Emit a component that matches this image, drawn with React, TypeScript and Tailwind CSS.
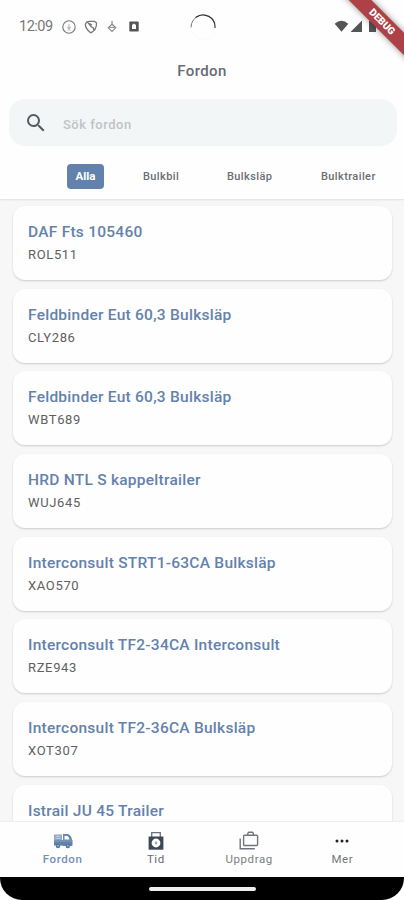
import React from "react";

const vehicles = [
  { name: "DAF Fts 105460", plate: "ROL511" },
  { name: "Feldbinder Eut 60,3 Bulksläp", plate: "CLY286" },
  { name: "Feldbinder Eut 60,3 Bulksläp", plate: "WBT689" },
  { name: "HRD NTL S kappeltrailer", plate: "WUJ645" },
  { name: "Interconsult STRT1-63CA Bulksläp", plate: "XAO570" },
  { name: "Interconsult TF2-34CA Interconsult", plate: "RZE943" },
  { name: "Interconsult TF2-36CA Bulksläp", plate: "XOT307" },
  { name: "Istrail JU 45 Trailer", plate: "" },
];

function StatusBar() {
  return (
    <div className="flex h-[54px] shrink-0 items-center pl-[19px] text-[#777]">
      <span className="w-[34px] text-[14.5px] leading-none tracking-[-0.5px]">12:09</span>
      <svg className="ml-[9px]" width="14" height="14" viewBox="0 0 14 14" fill="none" stroke="#777" strokeWidth="1.1">
        <circle cx="7" cy="7" r="6.2" />
        <path d="M7 4v4M5.3 7 7 8.8 8.7 7M5.5 10h3" stroke="#bbb" />
      </svg>
      <svg className="ml-[8px]" width="14" height="14" viewBox="0 0 14 14" fill="none" stroke="#777" strokeWidth="1.3">
        <path d="M3.5 2.2 7 6.5l2.6 1.7V11M6.8 13C3.8 10.5 1.2 8 1.4 4.2L2.6 2 5 1.3h5.5l2 1.6c.2 2.6-.3 4.7-1.5 6.6L6.8 13M5.5 3.5 8 5" />
      </svg>
      <svg className="ml-[9px]" width="10" height="12" viewBox="0 0 10 12" fill="none" stroke="#888" strokeWidth="1.2">
        <path d="M5 0v3M5 3 8.7 6.8 5 10.5 1.3 6.8Z" />
        <path d="M1.5 6.4h7" stroke="#999" />
      </svg>
      <svg className="ml-[12px]" width="10" height="12" viewBox="0 0 10 12">
        <rect x=".3" y=".5" width="9.4" height="10" rx=".8" fill="#555" />
        <path d="M3 8V4L5 2.5 7 4v4Z" fill="#fff" />
      </svg>
      <svg className="ml-[50px]" width="28" height="28" viewBox="0 0 28 28" fill="none" strokeLinecap="round">
        <circle cx="14" cy="14" r="12.3" stroke="#fafafa" />
        <path d="M2 14A12 12 0 0 1 10.5 2.5" stroke="#777" strokeWidth="1" />
        <path d="M7 4.2A12 12 0 0 1 26 14.5" stroke="#333" strokeWidth="1.2" />
      </svg>
      <svg className="ml-[117px]" width="44" height="14" viewBox="0 0 44 14" fill="#555">
        <path d="M.7 3.8Q7.5-2.3 14.3 3.8L7.5 11.7Z" />
        <path d="M28 .5V12H16.5Z" />
        <path d="M35 1h2V-.2h3V1h2v11h-7z" />
      </svg>
    </div>
  );
}

function Category({ label, className }: { label: string; className: string }) {
  return <span className={"whitespace-nowrap text-[11px] font-medium leading-none tracking-[0.4px] text-[#6b6e73] " + className}>{label}</span>;
}

function TruckIcon() {
  return (
    <svg width="20" height="18" viewBox="0 0 20 18">
      <path d="M1 2.5h8v5.5H1z" fill="#8ea5c3" />
      <path d="M2.5 4.3h5M2.5 6.3h5" stroke="#dbe4ef" strokeWidth=".7" />
      <path d="M10 2h5q3.5 1.5 4 6v6H10Z" fill="#6888b0" />
      <path d="M11.5 4h3q1.6 1.2 2 3.6h-5z" fill="#fff" />
      <path d="M1 8h18.5v5.6H1z" fill="#6282ab" />
      <path d="M1 9h18" stroke="#88a1c2" />
      <circle cx="5" cy="14" r="2.2" fill="#52749f" />
      <circle cx="14.8" cy="14" r="2.2" fill="#52749f" />
      <circle cx="5" cy="13.8" r=".8" fill="#c7d4e5" />
      <circle cx="14.8" cy="13.8" r=".8" fill="#c7d4e5" />
    </svg>
  );
}

function ClockIcon() {
  return (
    <svg width="18" height="20" viewBox="0 0 18 20">
      <path d="M4.7 6V1.7h8.6V6" fill="none" stroke="#69717d" strokeWidth="1.3" />
      <path d="M1.6 5.5h14.8v13.2H1.6z" fill="#3d4857" />
      <circle cx="9" cy="12" r="4.4" fill="#fff" />
      <path d="M9 10.5v2l.8.5" fill="none" stroke="#7f8893" strokeWidth="1.4" />
    </svg>
  );
}

function JobsIcon() {
  return (
    <svg width="20" height="20" viewBox="0 0 20 20" fill="none" stroke="#70757c" strokeWidth="1.4">
      <rect x="4.6" y="4.2" width="14" height="10.3" rx="1" />
      <path d="M8.8 4.2V2.3l1-1h3.6l1 1v1.9M1.2 7.5v10.2h14.6" />
    </svg>
  );
}

function NavItem({ label, className, children }: { label: string; className: string; children: React.ReactNode }) {
  return (
    <div className="flex flex-1 flex-col items-center pt-[9px]">
      <div className="flex h-[20px] items-center">{children}</div>
      <span className={"mt-[2px] text-[11.5px] leading-[12px] tracking-[0.6px] " + className}>{label}</span>
    </div>
  );
}

export default function App() {
  return (
    <div className="relative flex h-[900px] w-[404px] flex-col overflow-hidden bg-[#f7f7f7] font-['Roboto','Liberation_Sans',sans-serif]">
      <header className="flex h-[199px] shrink-0 flex-col bg-[#fefefe] shadow-[0_1px_2px_rgba(0,0,0,0.1)]">
        <StatusBar />
        <h1 className="flex h-[34px] items-center justify-center text-[15px] font-medium tracking-[0.4px] text-[#666b74]">Fordon</h1>
        <div className="ml-[9px] mr-[7px] mt-[11px] flex h-[47px] shrink-0 items-center rounded-[16px] bg-[#f3f6f7] pl-[15px]">
          <svg width="24" height="24" viewBox="0 0 24 24" fill="#555a61">
            <path d="M15.5 14h-.79l-.28-.27A6.47 6.47 0 0 0 16 9.5 6.5 6.5 0 1 0 9.5 16c1.61 0 3.09-.59 4.23-1.57l.27.28v.79l5 4.99L20.49 19zm-6 0a4.5 4.5 0 1 1 0-9 4.5 4.5 0 0 1 0 9" />
          </svg>
          <span className="ml-[15px] mt-[3px] text-[13px] font-medium leading-none tracking-[0.5px] text-[#c0c3c5]">Sök fordon</span>
        </div>
        <nav className="flex h-[53px] items-center pl-[67px] pt-[8px]">
          <div className="flex h-[25px] w-[37px] items-center justify-center rounded-[4px] bg-[#6282ab] pt-px text-[11.5px] font-bold text-white">Alla</div>
          <Category label="Bulkbil" className="ml-[39px] w-[84px]" />
          <Category label="Bulksläp" className="w-[94px]" />
          <Category label="Bulktrailer" className="" />
        </nav>
      </header>

      <main className="flex min-h-0 flex-1 flex-col gap-[8.7px] overflow-hidden pl-[13px] pr-[12px] pt-[7px]">
        {vehicles.map((vehicle, i) => (
          <article key={i} className="h-[74px] shrink-0 rounded-[12px] bg-[#fefefe] pl-[15px] pt-[16px] shadow-[0_1px_2px_rgba(0,0,0,0.18)]">
            <h2 className="whitespace-nowrap text-[15.5px] font-medium leading-[20px] tracking-[0.25px] text-[#6482ac]">{vehicle.name}</h2>
            <p className="mt-[5px] text-[13px] leading-[16px] tracking-[0.65px] text-[#606060]">{vehicle.plate}</p>
          </article>
        ))}
      </main>

      <nav className="flex h-[56px] shrink-0 border-t border-[#eeeeee] bg-[#fefefe] pl-[16px] pr-[15px]">
        <NavItem label="Fordon" className="font-medium text-[#7490b6]"><TruckIcon /></NavItem>
        <NavItem label="Tid" className="text-[#666b72]"><ClockIcon /></NavItem>
        <NavItem label="Uppdrag" className="text-[#7b7e82]"><JobsIcon /></NavItem>
        <NavItem label="Mer" className="text-[#74777b]">
          <svg width="14" height="4" viewBox="0 0 14 4" fill="#222"><circle cx="2" cy="2" r="1.5" /><circle cx="7" cy="2" r="1.5" /><circle cx="12" cy="2" r="1.5" /></svg>
        </NavItem>
      </nav>
      <footer className="h-[23px] shrink-0 bg-[#fefefe]">
        <div className="flex h-full justify-center rounded-b-[22px] bg-black pt-[10px]">
          <div className="h-[4px] w-[107px] rounded-full bg-[#eeeeee]" />
        </div>
      </footer>

      <div className="absolute left-[322px] top-[14px] flex h-[16px] w-[120px] rotate-45 items-center justify-center bg-[#ad4147] text-[10px] font-black leading-none text-white shadow-[0_0_6px_rgba(0,0,0,0.45)]">DEBUG</div>
    </div>
  );
}
